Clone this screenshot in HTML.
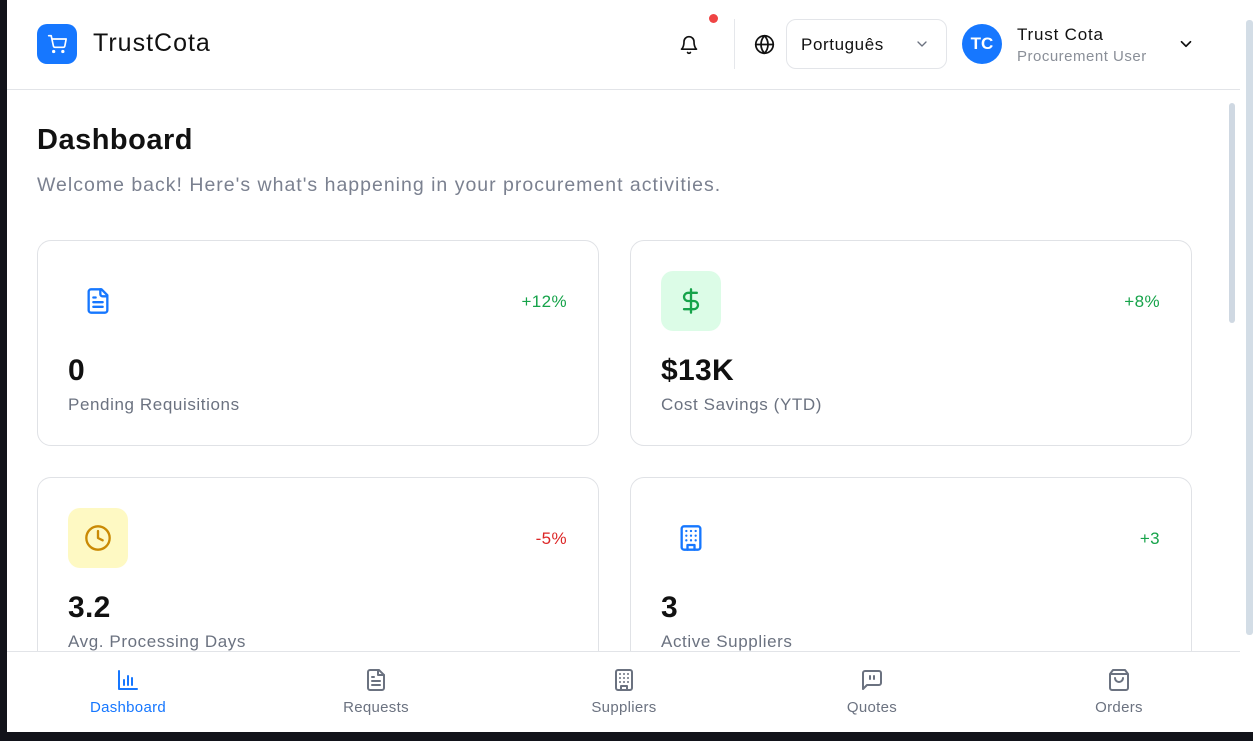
<!DOCTYPE html>
<html><head><meta charset="utf-8"><style>
*{box-sizing:border-box;margin:0;padding:0}
body{width:1253px;height:741px;overflow:hidden;background:#fff;font-family:"Liberation Sans",sans-serif;position:relative;color:#111827}
.dl{position:absolute;left:0;top:0;width:7px;height:741px;background:#12131a}
.db{position:absolute;left:0;top:732px;width:1253px;height:9px;background:#12131a}
.hdr{position:absolute;left:7px;top:0;width:1233px;height:90px;border-bottom:1px solid #e2e4e8;background:#fff}
.logo{position:absolute;left:30px;top:24px;width:40px;height:40px;border-radius:10px;background:#1677ff;display:flex;align-items:center;justify-content:center}
.brand{position:absolute;left:86px;top:29px;font-size:25px;font-weight:500;color:#111;letter-spacing:1px}
.abs{position:absolute}
.sel{position:absolute;left:779px;top:19px;width:161px;height:50px;border:1px solid #e3e5e9;border-radius:10px}
.av{position:absolute;left:955px;top:24px;width:40px;height:40px;border-radius:50%;background:#1677ff;color:#fff;font-weight:bold;font-size:17px;display:flex;align-items:center;justify-content:center}
.card{position:absolute;width:562px;height:206px;border:1px solid #e0e2e6;border-radius:14px;background:#fff}
.ic{position:absolute;left:30px;top:30px;width:60px;height:60px;border-radius:12px;display:flex;align-items:center;justify-content:center}
.pct{position:absolute;right:31px;top:51px;font-size:17px;letter-spacing:0.4px}
.val{position:absolute;left:30px;top:113px;font-size:30px;font-weight:bold;color:#111;letter-spacing:0.3px}
.lbl{position:absolute;left:30px;top:154px;font-size:17px;color:#6b7280;letter-spacing:0.6px}
.nav{position:absolute;left:7px;top:651px;width:1233px;height:81px;background:#fff;border-top:1px solid #e2e4e8}
.ni{position:absolute;top:16px;width:140px;text-align:center;font-size:15px;color:#6b7280;letter-spacing:0.3px}
.ni svg{display:block;margin:0 auto 7px}
svg{stroke-linecap:round;stroke-linejoin:round}
</style></head><body>
<div class="hdr">
 <div class="logo"><svg width="20" height="20" viewBox="0 0 24 24" fill="none" stroke="#fff" stroke-width="2"><circle cx="8" cy="21" r="1"/><circle cx="19" cy="21" r="1"/><path d="M2 2h3l2.7 12.4a2 2 0 0 0 2 1.6h9.7a2 2 0 0 0 2-1.6L23 6H6"/></svg></div>
 <div class="brand">TrustCota</div>
 <svg class="abs" style="left:672px;top:35px" width="20" height="20" viewBox="0 0 24 24" fill="none" stroke="#111" stroke-width="2"><path d="M6 8a6 6 0 0 1 12 0c0 7 3 9 3 9H3s3-2 3-9"/><path d="M10.3 21a1.94 1.94 0 0 0 3.4 0"/></svg>
 <div class="abs" style="left:702px;top:14px;width:9px;height:9px;border-radius:50%;background:#ef4444"></div>
 <div class="abs" style="left:727px;top:19px;width:1px;height:50px;background:#e5e7eb"></div>
 <svg class="abs" style="left:747px;top:34px" width="21" height="21" viewBox="0 0 24 24" fill="none" stroke="#111" stroke-width="2"><circle cx="12" cy="12" r="10"/><path d="M12 2a14.5 14.5 0 0 0 0 20 14.5 14.5 0 0 0 0-20M2 12h20"/></svg>
 <div class="sel"><span class="abs" style="left:14px;top:15px;font-size:17px;color:#111;letter-spacing:0.6px">Português</span><svg class="abs" style="left:127px;top:16px" width="16" height="16" viewBox="0 0 24 24" fill="none" stroke="#6b7280" stroke-width="2"><path d="m6 9 6 6 6-6"/></svg></div>
 <div class="av">TC</div>
 <div class="abs" style="left:1010px;top:25px;font-size:17px;font-weight:500;color:#111;letter-spacing:0.8px">Trust Cota</div>
 <div class="abs" style="left:1010px;top:48px;font-size:15px;color:#8a8f98;letter-spacing:0.5px">Procurement User</div>
 <svg class="abs" style="left:1170px;top:35px" width="18" height="18" viewBox="0 0 24 24" fill="none" stroke="#111" stroke-width="2.2"><path d="m6 9 6 6 6-6"/></svg>
</div>
<div class="abs" style="left:37px;top:124px;font-size:29px;font-weight:bold;color:#111;letter-spacing:0.5px">Dashboard</div>
<div class="abs" style="left:37px;top:174px;font-size:19.5px;color:#7b8190;letter-spacing:1px">Welcome back! Here's what's happening in your procurement activities.</div>

<div class="card" style="left:37px;top:240px">
 <div class="ic"><svg width="28" height="28" viewBox="0 0 24 24" fill="none" stroke="#1677ff" stroke-width="2"><path d="M15 2H6a2 2 0 0 0-2 2v16a2 2 0 0 0 2 2h12a2 2 0 0 0 2-2V7z"/><path d="M14 2v4a2 2 0 0 0 2 2h4M10 9H8M16 13H8M16 17H8"/></svg></div>
 <div class="pct" style="color:#16a34a">+12%</div><div class="val">0</div><div class="lbl">Pending Requisitions</div></div>
<div class="card" style="left:630px;top:240px">
 <div class="ic" style="background:#dcfce7"><svg width="28" height="28" viewBox="0 0 24 24" fill="none" stroke="#16a34a" stroke-width="2"><path d="M12 2v20M17 5H9.5a3.5 3.5 0 0 0 0 7h5a3.5 3.5 0 0 1 0 7H6"/></svg></div>
 <div class="pct" style="color:#16a34a">+8%</div><div class="val">$13K</div><div class="lbl">Cost Savings (YTD)</div></div>
<div class="card" style="left:37px;top:477px">
 <div class="ic" style="background:#fef9c3"><svg width="28" height="28" viewBox="0 0 24 24" fill="none" stroke="#ca8a04" stroke-width="2"><circle cx="12" cy="12" r="10"/><path d="M12 6v6l4 2"/></svg></div>
 <div class="pct" style="color:#dc2626">-5%</div><div class="val">3.2</div><div class="lbl">Avg. Processing Days</div></div>
<div class="card" style="left:630px;top:477px">
 <div class="ic"><svg width="28" height="28" viewBox="0 0 24 24" fill="none" stroke="#1677ff" stroke-width="2"><rect x="4" y="2" width="16" height="20" rx="2"/><path d="M9 22v-4h6v4M8 6h.01M12 6h.01M16 6h.01M8 10h.01M12 10h.01M16 10h.01M8 14h.01M12 14h.01M16 14h.01"/></svg></div>
 <div class="pct" style="color:#16a34a">+3</div><div class="val">3</div><div class="lbl">Active Suppliers</div></div>

<div class="nav">
 <div class="ni" style="left:51px;color:#1677ff"><svg width="24" height="24" viewBox="0 0 24 24" fill="none" stroke="#1677ff" stroke-width="2"><path d="M3 3v18h18M8 17v-5M12 17V8M16 17v-7"/></svg>Dashboard</div>
 <div class="ni" style="left:299px"><svg width="24" height="24" viewBox="0 0 24 24" fill="none" stroke="#6b7280" stroke-width="2"><path d="M15 2H6a2 2 0 0 0-2 2v16a2 2 0 0 0 2 2h12a2 2 0 0 0 2-2V7z"/><path d="M14 2v5h6M16 13H8M16 17H8M10 9H8"/></svg>Requests</div>
 <div class="ni" style="left:547px"><svg width="24" height="24" viewBox="0 0 24 24" fill="none" stroke="#6b7280" stroke-width="2"><rect x="4" y="2" width="16" height="20" rx="2"/><path d="M9 22v-4h6v4M8 6h.01M12 6h.01M16 6h.01M8 10h.01M12 10h.01M16 10h.01M8 14h.01M12 14h.01M16 14h.01"/></svg>Suppliers</div>
 <div class="ni" style="left:795px"><svg width="24" height="24" viewBox="0 0 24 24" fill="none" stroke="#6b7280" stroke-width="2"><path d="M21 15a2 2 0 0 1-2 2H7l-4 4V5a2 2 0 0 1 2-2h14a2 2 0 0 1 2 2z"/><path d="M10 8v3M14 8v3"/></svg>Quotes</div>
 <div class="ni" style="left:1042px"><svg width="24" height="24" viewBox="0 0 24 24" fill="none" stroke="#6b7280" stroke-width="2"><path d="M6 2 3 6v14a2 2 0 0 0 2 2h14a2 2 0 0 0 2-2V6l-3-4zM3 6h18M16 10a4 4 0 0 1-8 0"/></svg>Orders</div>
</div>
<div class="abs" style="left:1229px;top:103px;width:6px;height:220px;border-radius:3px;background:#cfd8e2"></div>
<div class="abs" style="left:1246px;top:20px;width:7px;height:615px;border-radius:3px;background:#d3dde6"></div>
<div class="dl"></div><div class="db"></div>
</body></html>
